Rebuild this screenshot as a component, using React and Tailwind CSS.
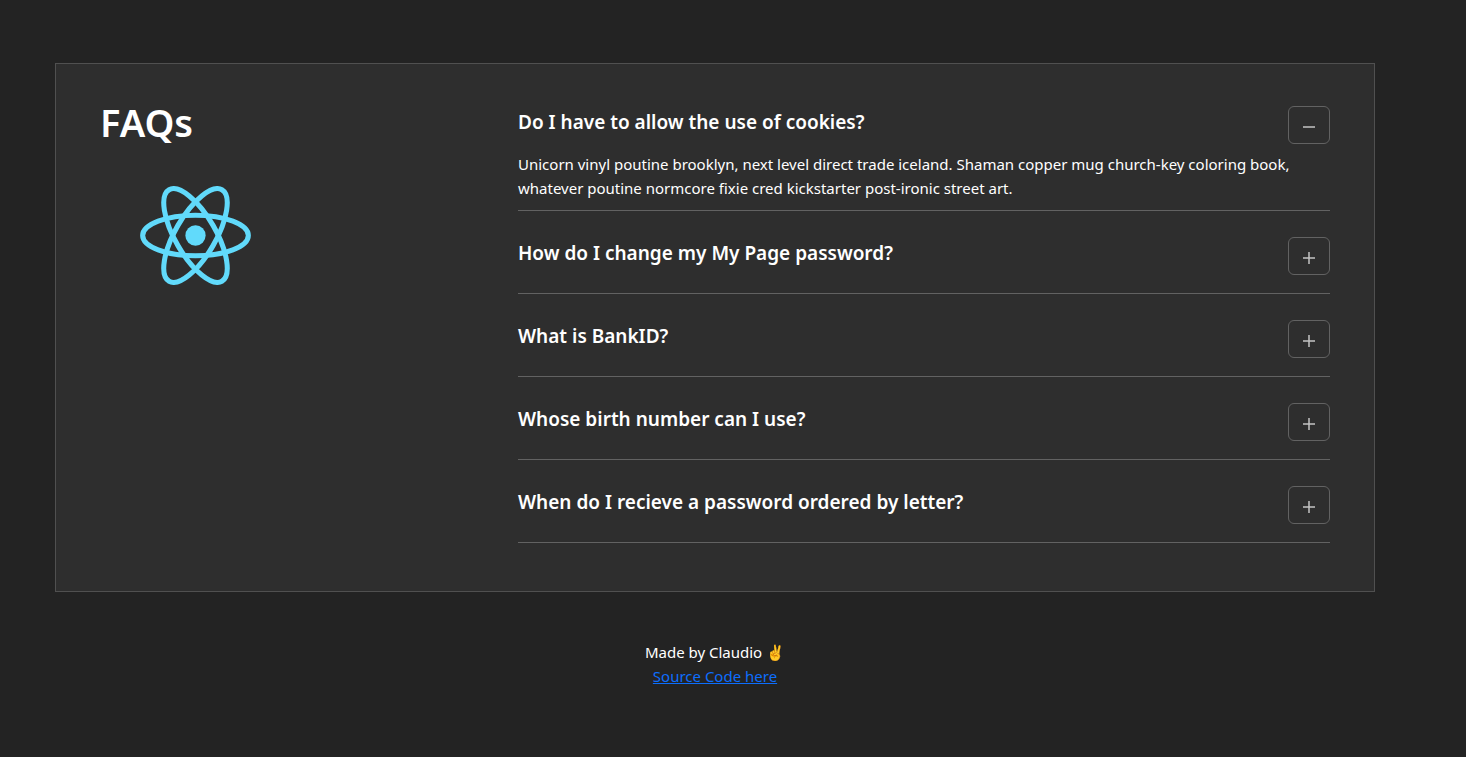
import { useState } from "react";

const questions = [
  {
    id: 1,
    title: "Do I have to allow the use of cookies?",
    info: "Unicorn vinyl poutine brooklyn, next level direct trade iceland. Shaman copper mug church-key coloring book, whatever poutine normcore fixie cred kickstarter post-ironic street art.",
  },
  {
    id: 2,
    title: "How do I change my My Page password?",
    info: "Coloring book forage photo booth gentrify lumbersexual. Migas chillwave poutine synth shoreditch, enamel pin thundercats fashion axe roof party polaroid chartreuse.",
  },
  {
    id: 3,
    title: "What is BankID?",
    info: "Enamel pin fam sustainable woke whatever venmo. Authentic asymmetrical put a bird on it, lumbersexual activated charcoal kinfolk banjo cred pickled sartorial.",
  },
  {
    id: 4,
    title: "Whose birth number can I use?",
    info: "Edison bulb direct trade gentrify beard lo-fi seitan sustainable roof party franzen occupy squid. Knausgaard cronut succulents, scenester readymade shabby chic lyft.",
  },
  {
    id: 5,
    title: "When do I recieve a password ordered by letter?",
    info: "Locavore franzen fashion axe live-edge neutra irony synth af tilde shabby chic man braid chillwave waistcoat copper mug messenger bag.",
  },
];

function ReactLogo() {
  return (
    <svg
      viewBox="-11.5 -10.23 23 20.46"
      className="mt-10 ml-10 h-[99px] w-[111px]"
      role="img"
      aria-label="React"
    >
      <circle r="2.1" fill="#61dafb" />
      <g stroke="#61dafb" strokeWidth="1.05" fill="none">
        <ellipse rx="10.95" ry="4.2" />
        <ellipse rx="10.95" ry="4.2" transform="rotate(60)" />
        <ellipse rx="10.95" ry="4.2" transform="rotate(120)" />
      </g>
    </svg>
  );
}

function ToggleIcon({ open }) {
  return (
    <svg
      viewBox="0 0 12 12"
      className="size-3"
      stroke="currentColor"
      strokeWidth="1.5"
      aria-hidden="true"
    >
      <path d={open ? "M0 6H12" : "M0 6H12M6 0V12"} />
    </svg>
  );
}

function Question({ id, title, info, open, onToggle }) {
  return (
    <article className="border-b border-[#626262] pt-[26px] pb-[10px]">
      <div className="mb-2 flex items-start justify-between">
        <h2 className="text-[19px] leading-8 font-semibold">{title}</h2>
        <button
          type="button"
          aria-label={open ? "Hide answer" : "Show answer"}
          aria-expanded={open}
          aria-controls={`answer-${id}`}
          onClick={onToggle}
          className="flex h-[38px] w-[42px] shrink-0 items-center justify-center rounded-md border border-[#626262] pt-1 text-[#c4c4c4]"
        >
          <ToggleIcon open={open} />
        </button>
      </div>
      <p id={`answer-${id}`} hidden={!open}>
        {info}
      </p>
    </article>
  );
}

export default function App() {
  const [openId, setOpenId] = useState(1);

  return (
    <div className="min-h-screen bg-[#232323] pt-[63px] pr-9 pb-16 font-['Noto_Sans',sans-serif] text-[15px] leading-6 text-white">
      <main className="mx-auto grid max-w-[1320px] grid-cols-1 gap-x-6 border border-[#505050] bg-[#2e2e2e] px-11 pt-4 pb-12 md:grid-cols-3">
        <div className="pt-[18px]">
          <h1 className="text-[38px] leading-12 font-semibold">FAQs</h1>
          <ReactLogo />
        </div>
        <section className="md:col-span-2">
          {questions.map((q) => (
            <Question
              key={q.id}
              {...q}
              open={openId === q.id}
              onToggle={() => setOpenId(openId === q.id ? null : q.id)}
            />
          ))}
        </section>
      </main>
      <footer className="mt-12 text-center">
        <p>Made by Claudio ✌️</p>
        <a href="#source" className="text-[#0d6efd] underline">
          Source Code here
        </a>
      </footer>
    </div>
  );
}
